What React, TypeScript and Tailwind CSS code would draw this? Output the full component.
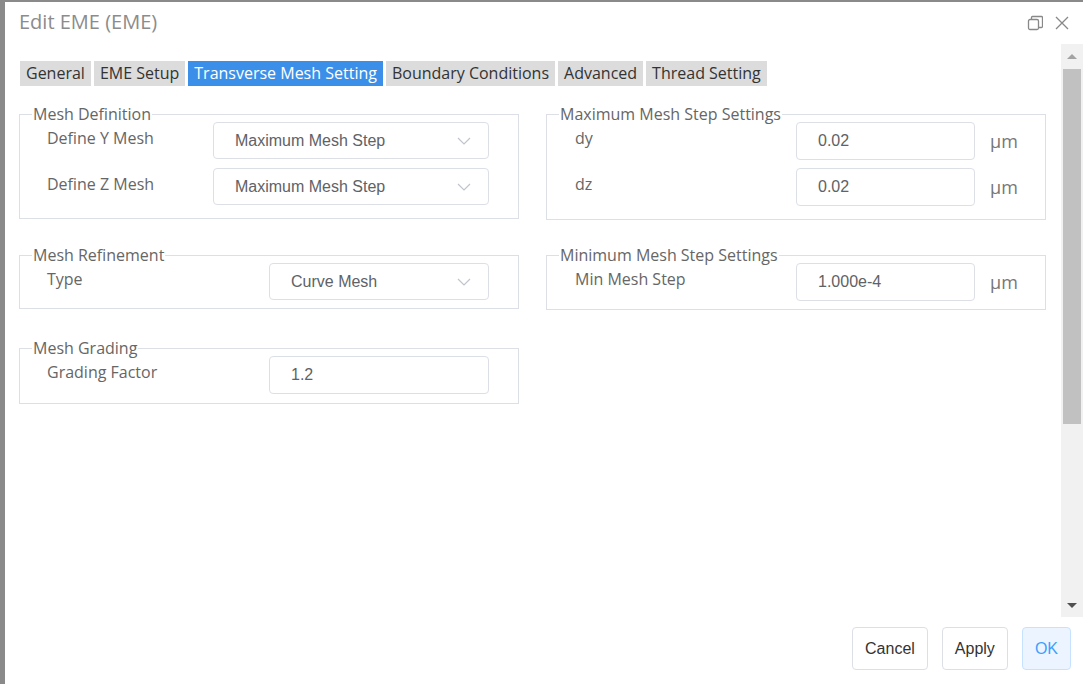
import React from 'react';

const tabs = ['General', 'EME Setup', 'Transverse Mesh Setting', 'Boundary Conditions', 'Advanced', 'Thread Setting'];

const Chevron: React.FC = () => (
  <svg width="14" height="8" viewBox="0 0 14 8" fill="none" stroke="#c0c4cc" strokeWidth="1.2">
    <path d="M1 1l6 6 6-6" />
  </svg>
);

const Select: React.FC<{ value: string; width: string }> = ({ value, width }) => (
  <div className={`${width} h-[37px] flex items-center justify-between rounded-[4px] border border-[#dcdfe6] bg-white pl-[21px] pr-[17px] font-['Liberation_Sans',Arial,sans-serif] text-[16px] text-[#606266]`}>
    <span>{value}</span>
    <Chevron />
  </div>
);

const Input: React.FC<{ value: string; width: string }> = ({ value, width }) => (
  <div className={`${width} h-[38px] flex items-center rounded-[4px] border border-[#dcdfe6] bg-white pl-[21px] font-['Liberation_Sans',Arial,sans-serif] text-[16px] text-[#606266]`}>
    {value}
  </div>
);

const Group: React.FC<{ title: string; className?: string; children: React.ReactNode }> = ({ title, className, children }) => (
  <fieldset className={`border border-[#dcdfe6] ${className ?? ''}`}>
    <legend className="ml-[12px] px-[1px] text-[16px] leading-[16px] text-[#666]">{title}</legend>
    {children}
  </fieldset>
);

const Row: React.FC<{ label: string; children: React.ReactNode; unit?: boolean }> = ({ label, children, unit }) => (
  <div className="flex items-start">
    <div className="flex-1 leading-[32px] text-[16px] text-[#666]">{label}</div>
    {children}
    {unit && <div className="w-[41px] h-[38px] flex items-center pl-[15px] text-[18px] text-[#777]">µm</div>}
  </div>
);

export default function App() {
  return (
    <div className="w-[1083px] h-[684px] bg-[#8a8a8a] pl-[5px] pt-[2px] overflow-hidden font-['Open_Sans','Noto_Sans',sans-serif]">
      <div className="w-full h-full bg-white flex flex-col">
        {/* header */}
        <div className="h-[42px] shrink-0 flex items-start justify-between pl-[14px] pr-[14px]">
          <div className="pt-[6px] text-[20px] leading-[28px] text-[#8c8c8c]">Edit EME (EME)</div>
          <div className="flex items-center gap-[12px] pt-[13px]">
            <svg width="16" height="16" viewBox="0 0 16 16" fill="none" stroke="#888" strokeWidth="1.3">
              <rect x="1.5" y="4.5" width="10" height="10" rx="1.5" />
              <path d="M4.5 4.5V2.5a1 1 0 0 1 1-1h9a1 1 0 0 1 1 1v9a1 1 0 0 1-1 1h-3" />
            </svg>
            <svg width="14" height="14" viewBox="0 0 14 14" fill="none" stroke="#888" strokeWidth="1.3">
              <path d="M1 1l12 12M13 1L1 13" />
            </svg>
          </div>
        </div>

        {/* body */}
        <div className="flex-1 flex min-h-0">
          <div className="flex-1 pl-[14px] pt-[17px]">
            <div className="flex gap-[3px] pl-[1px]">
              {tabs.map((t) => (
                <div
                  key={t}
                  className={`h-[25px] px-[6px] text-[16px] leading-[25px] ${
                    t === 'Transverse Mesh Setting' ? 'bg-[#3b8fe8] text-white' : 'bg-[#dcdcdc] text-[#333]'
                  }`}
                >
                  {t}
                </div>
              ))}
            </div>

            <div className="flex gap-[27px] mt-[20px]">
              <div className="w-[500px] flex flex-col">
                <Group title="Mesh Definition" className="pb-[13px]">
                  <div className="flex flex-col gap-[9px] pl-[27px] pr-[29px]">
                    <Row label="Define Y Mesh">
                      <Select value="Maximum Mesh Step" width="w-[276px]" />
                    </Row>
                    <Row label="Define Z Mesh">
                      <Select value="Maximum Mesh Step" width="w-[276px]" />
                    </Row>
                  </div>
                </Group>
                <Group title="Mesh Refinement" className="mt-[28px] pb-[8px]">
                  <div className="pl-[27px] pr-[29px]">
                    <Row label="Type">
                      <Select value="Curve Mesh" width="w-[220px]" />
                    </Row>
                  </div>
                </Group>
                <Group title="Mesh Grading" className="mt-[31px] pb-[9px]">
                  <div className="pl-[27px] pr-[29px]">
                    <Row label="Grading Factor">
                      <Input value="1.2" width="w-[220px]" />
                    </Row>
                  </div>
                </Group>
              </div>

              <div className="w-[500px] flex flex-col">
                <Group title="Maximum Mesh Step Settings" className="pb-[13px]">
                  <div className="flex flex-col gap-[8px] pl-[28px] pr-[29px]">
                    <Row label="dy" unit>
                      <Input value="0.02" width="w-[179px]" />
                    </Row>
                    <Row label="dz" unit>
                      <Input value="0.02" width="w-[179px]" />
                    </Row>
                  </div>
                </Group>
                <Group title="Minimum Mesh Step Settings" className="mt-[27px] pb-[8px]">
                  <div className="pl-[28px] pr-[29px]">
                    <Row label="Min Mesh Step" unit>
                      <Input value="1.000e-4" width="w-[179px]" />
                    </Row>
                  </div>
                </Group>
              </div>
            </div>
          </div>

          {/* scrollbar */}
          <div className="w-[22px] bg-[#f1f1f1] flex flex-col">
            <div className="h-[25px] flex items-center justify-center">
              <div className="w-0 h-0 border-l-[5px] border-r-[5px] border-b-[5px] border-l-transparent border-r-transparent border-b-[#a3a3a3]" />
            </div>
            <div className="h-[355px] mx-[2px] bg-[#c1c1c1]" />
            <div className="flex-1" />
            <div className="h-[24px] flex items-center justify-center">
              <div className="w-0 h-0 border-l-[5px] border-r-[5px] border-t-[5px] border-l-transparent border-r-transparent border-t-[#505050]" />
            </div>
          </div>
        </div>

        {/* footer */}
        <div className="h-[67px] shrink-0 pt-[10px] flex items-start justify-end gap-[14px] pr-[12px] font-['Liberation_Sans',Arial,sans-serif] text-[16px]">
          <button className="h-[43px] px-[12px] rounded-[4px] border border-[#dcdfe6] bg-white text-[#333]">Cancel</button>
          <button className="h-[43px] px-[12px] rounded-[4px] border border-[#dcdfe6] bg-white text-[#333]">Apply</button>
          <button className="h-[43px] px-[12px] rounded-[4px] border border-[#c6e2ff] bg-[#ecf5ff] text-[#409eff]">OK</button>
        </div>
      </div>
    </div>
  );
}
